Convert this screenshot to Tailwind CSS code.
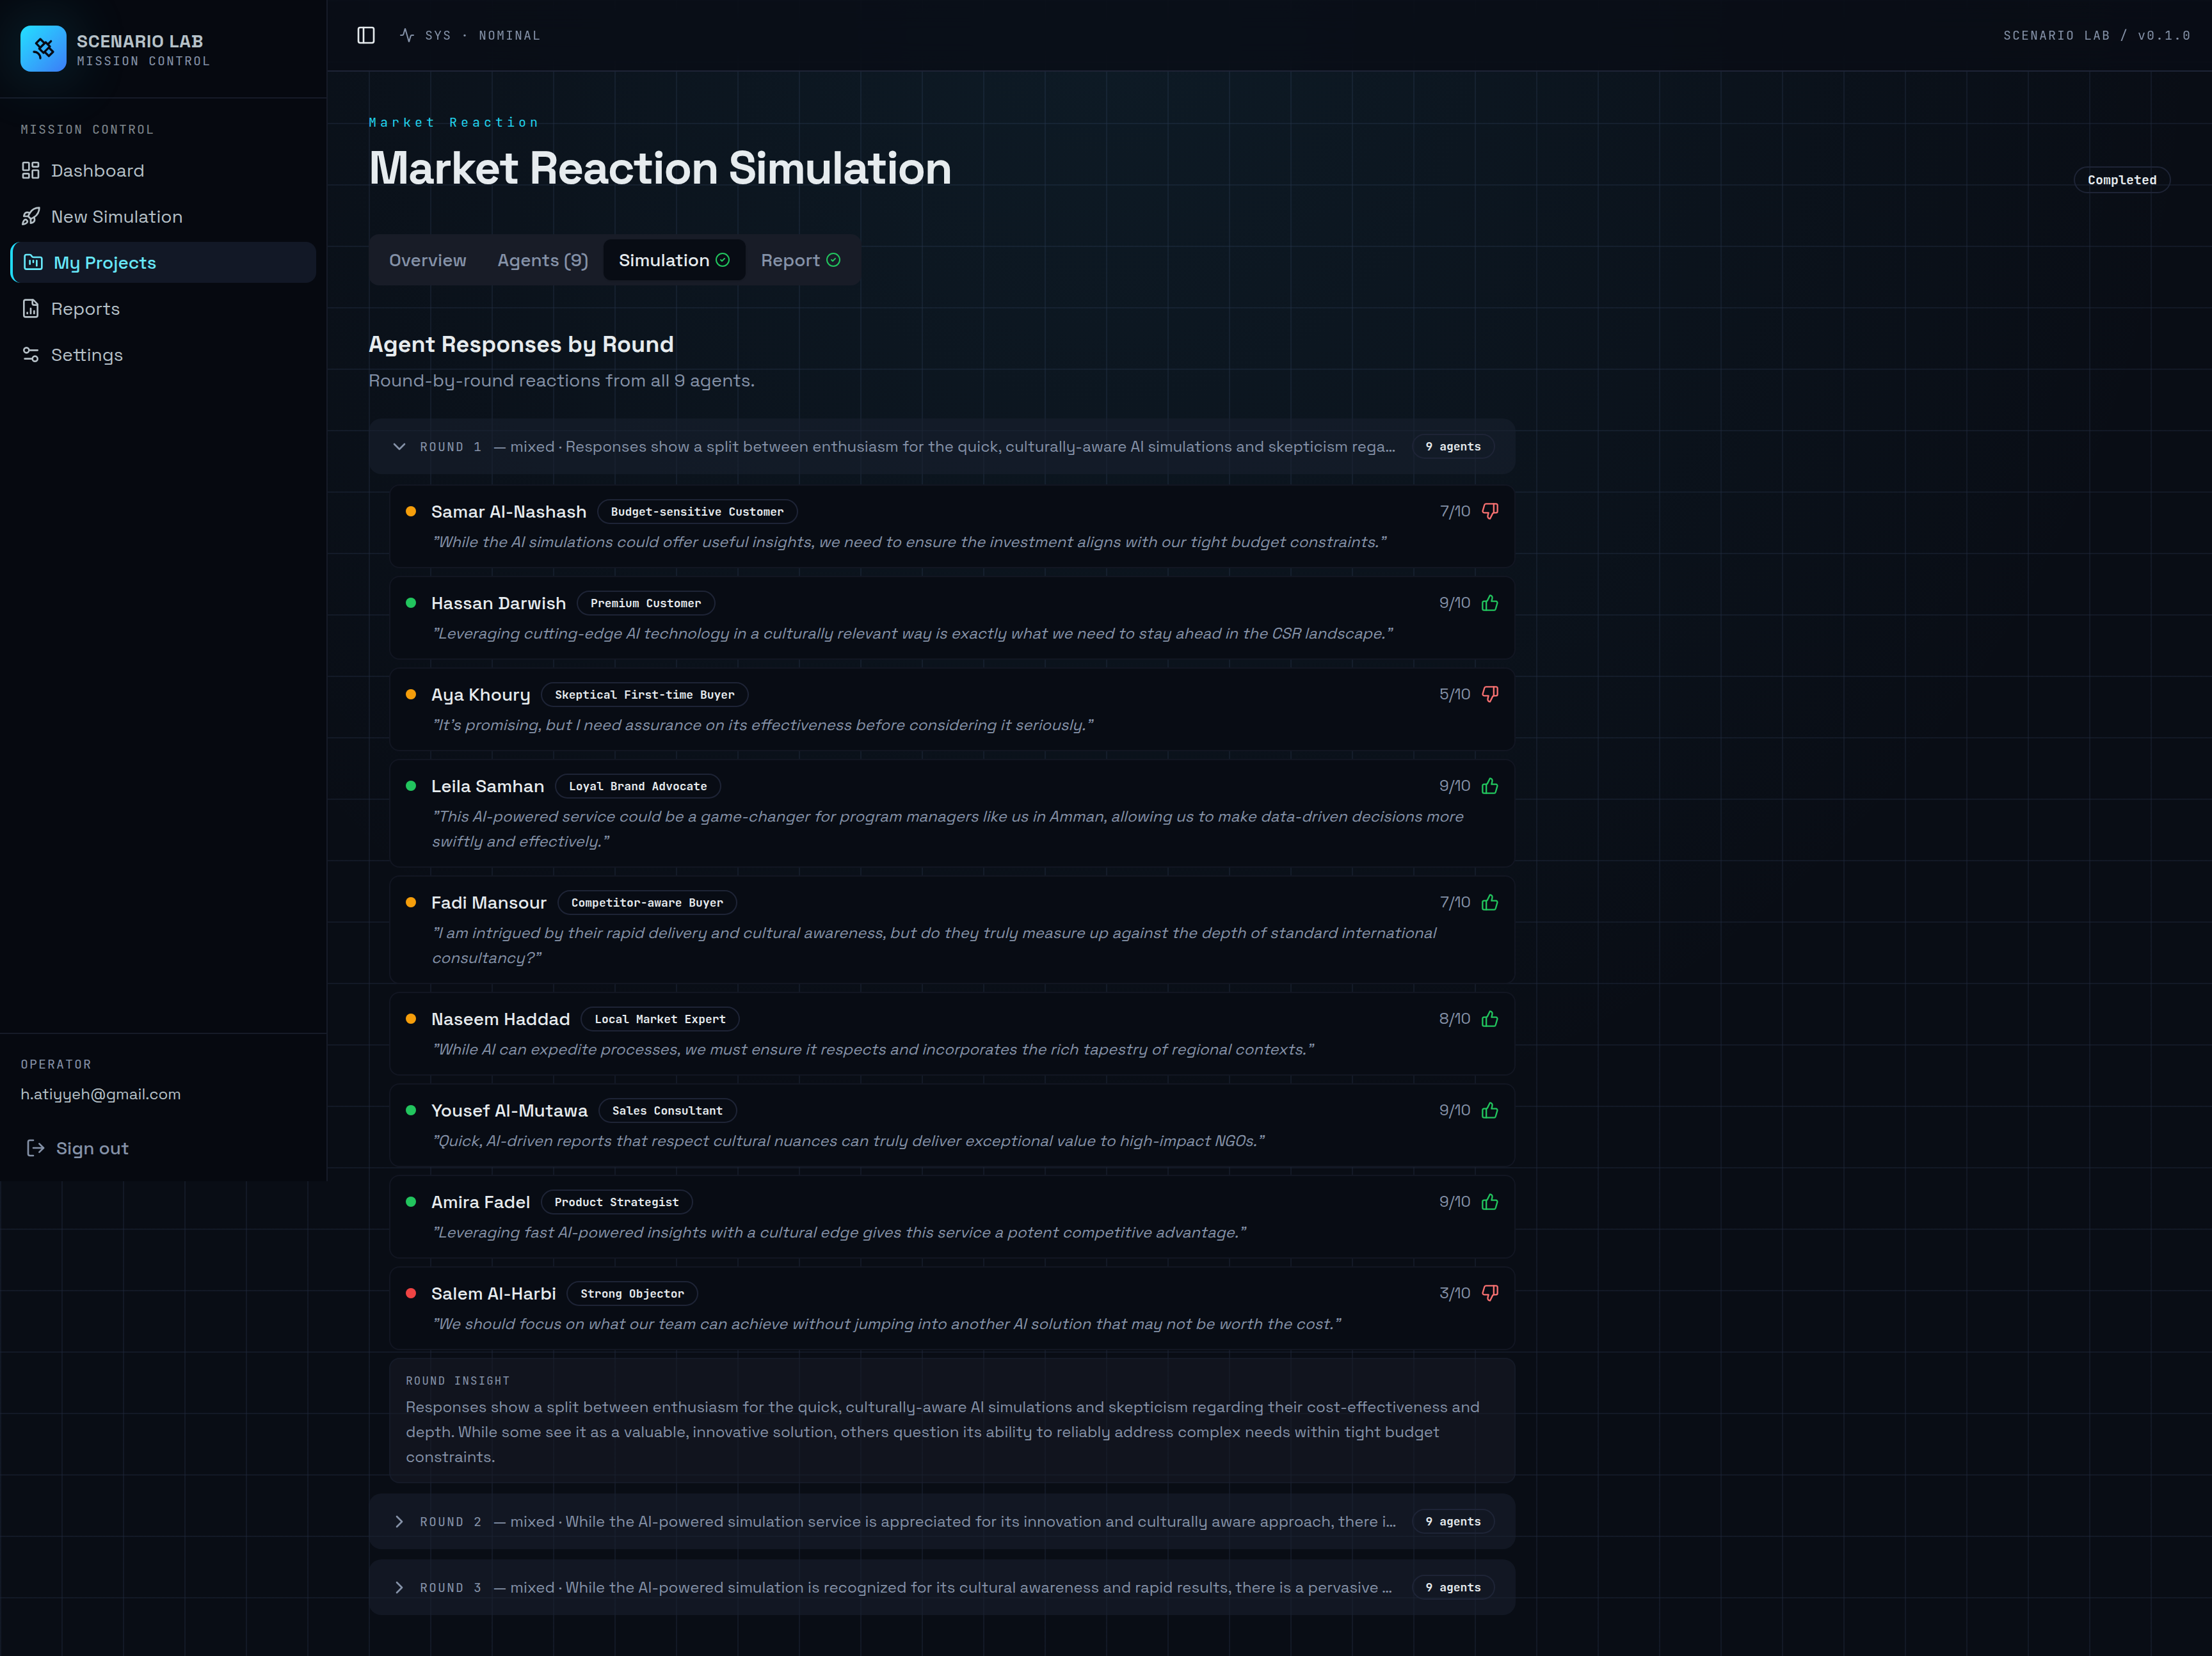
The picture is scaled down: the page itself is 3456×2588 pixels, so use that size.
<!DOCTYPE html>
<html lang="en">
<head>
<meta charset="utf-8">
<title>Scenario Lab</title>
<script src="https://cdn.jsdelivr.net/npm/@tailwindcss/browser@4"></script>
</head>
<body class="bg-[#090d15] font-['Space_Grotesk',Inter,sans-serif] text-[28px] leading-[40px] text-[#e6ebee] antialiased">

<svg class="hidden">
  <symbol id="up" viewBox="0 0 24 24" fill="none" stroke="currentColor" stroke-width="2" stroke-linecap="round" stroke-linejoin="round"><path d="M7 10v12"/><path d="M15 5.88 14 10h5.83a2 2 0 0 1 1.92 2.56l-2.33 8A2 2 0 0 1 17.5 22H4a2 2 0 0 1-2-2v-8a2 2 0 0 1 2-2h2.76a2 2 0 0 0 1.79-1.11L12 2a3.13 3.13 0 0 1 3 3.88Z"/></symbol>
  <symbol id="down" viewBox="0 0 24 24" fill="none" stroke="currentColor" stroke-width="2" stroke-linecap="round" stroke-linejoin="round"><path d="M17 14V2"/><path d="M9 18.12 10 14H4.17a2 2 0 0 1-1.92-2.56l2.33-8A2 2 0 0 1 6.5 2H20a2 2 0 0 1 2 2v8a2 2 0 0 1-2 2h-2.76a2 2 0 0 0-1.79 1.11L12 22a3.13 3.13 0 0 1-3-3.88Z"/></symbol>
  <symbol id="check" viewBox="0 0 24 24" fill="none" stroke="currentColor" stroke-width="2" stroke-linecap="round" stroke-linejoin="round"><circle cx="12" cy="12" r="10"/><path d="m9 12 2 2 4-4"/></symbol>
  <symbol id="right" viewBox="0 0 24 24" fill="none" stroke="currentColor" stroke-width="2" stroke-linecap="round" stroke-linejoin="round"><path d="m9 18 6-6-6-6"/></symbol>
</svg>

<div class="flex min-h-[2588px] w-[3456px] items-start bg-[radial-gradient(ellipse_1728px_1846px_at_50%_0,rgba(70,190,235,0.08),transparent),linear-gradient(to_right,rgba(34,42,62,0.4)_2px,transparent_2px),linear-gradient(to_bottom,rgba(34,42,62,0.4)_2px,transparent_2px)] bg-[size:100%_100%,96px_96px,96px_96px]">

  <aside class="flex h-[1846px] w-[512px] shrink-0 flex-col overflow-hidden border-r-2 border-[#161b28] bg-[#060910] text-[#b6c1c8]">
    <div class="flex h-[154px] shrink-0 items-start gap-4 border-b-2 border-[#161b28] px-8 pt-10">
      <div class="flex size-[72px] items-center justify-center rounded-2xl bg-linear-135 from-[#22e0ff] to-[#3b7bf6] text-[#060b16] shadow-[0_0_96px_rgba(34,211,238,0.25)]">
        <svg class="size-10" viewBox="0 0 24 24" fill="none" stroke="currentColor" stroke-width="2" stroke-linecap="round" stroke-linejoin="round"><path d="M13 7 9 3 5 7l4 4"/><path d="m17 11 4 4-4 4-4-4"/><path d="m8 12 4 4 6-6-4-4Z"/><path d="m16 8 3-3"/><path d="M9 21a6 6 0 0 0-6-6"/></svg>
      </div>
      <div class="pt-[7px]">
        <div class="text-[28px] leading-[35px] font-bold tracking-[0.7px]">SCENARIO LAB</div>
        <div class="font-['JetBrains_Mono',monospace] text-[20px] leading-[27px] tracking-[0.1em] text-[#8592a8]">MISSION CONTROL</div>
      </div>
    </div>
    <nav class="flex grow flex-col p-4">
      <div class="flex h-16 items-center px-4 font-['JetBrains_Mono',monospace] text-[20px] leading-[30px] tracking-[0.1em] text-[#7f878d]">MISSION CONTROL</div>
      <div class="flex flex-col gap-2">
        <a class="flex h-16 items-center gap-4 rounded-2xl px-4">
          <svg class="size-8" viewBox="0 0 24 24" fill="none" stroke="currentColor" stroke-width="2" stroke-linecap="round" stroke-linejoin="round"><rect width="7" height="9" x="3" y="3" rx="1"/><rect width="7" height="5" x="14" y="3" rx="1"/><rect width="7" height="9" x="14" y="12" rx="1"/><rect width="7" height="5" x="3" y="16" rx="1"/></svg>Dashboard</a>
        <a class="flex h-16 items-center gap-4 rounded-2xl px-4">
          <svg class="size-8" viewBox="0 0 24 24" fill="none" stroke="currentColor" stroke-width="2" stroke-linecap="round" stroke-linejoin="round"><path d="M4.5 16.5c-1.5 1.26-2 5-2 5s3.74-.5 5-2c.71-.84.7-2.13-.09-2.91a2.18 2.18 0 0 0-2.91-.09z"/><path d="m12 15-3-3a22 22 0 0 1 2-3.95A12.88 12.88 0 0 1 22 2c0 2.72-.78 7.5-6 11a22.35 22.35 0 0 1-4 2z"/><path d="M9 12H4s.55-3.03 2-4c1.62-1.08 5 0 5 0"/><path d="M12 15v5s3.03-.55 4-2c1.08-1.62 0-5 0-5"/></svg>New Simulation</a>
        <a class="flex h-16 items-center gap-4 rounded-2xl border-l-4 border-[#22dcfb] bg-[#121826] px-4 font-medium text-[#67e8f9]">
          <svg class="size-8" viewBox="0 0 24 24" fill="none" stroke="currentColor" stroke-width="2" stroke-linecap="round" stroke-linejoin="round"><path d="M4 20h16a2 2 0 0 0 2-2V8a2 2 0 0 0-2-2h-7.93a2 2 0 0 1-1.66-.9l-.82-1.2A2 2 0 0 0 7.93 3H4a2 2 0 0 0-2 2v13c0 1.1.9 2 2 2Z"/><path d="M8 10v4"/><path d="M12 10v2"/><path d="M16 10v6"/></svg>My Projects</a>
        <a class="flex h-16 items-center gap-4 rounded-2xl px-4">
          <svg class="size-8" viewBox="0 0 24 24" fill="none" stroke="currentColor" stroke-width="2" stroke-linecap="round" stroke-linejoin="round"><path d="M15 2H6a2 2 0 0 0-2 2v16a2 2 0 0 0 2 2h12a2 2 0 0 0 2-2V7Z"/><path d="M14 2v4a2 2 0 0 0 2 2h4"/><path d="M8 18v-1"/><path d="M12 18v-6"/><path d="M16 18v-3"/></svg>Reports</a>
        <a class="flex h-16 items-center gap-4 rounded-2xl px-4">
          <svg class="size-8" viewBox="0 0 24 24" fill="none" stroke="currentColor" stroke-width="2" stroke-linecap="round" stroke-linejoin="round"><path d="M20 7h-9"/><path d="M14 17H5"/><circle cx="17" cy="17" r="3"/><circle cx="7" cy="7" r="3"/></svg>Settings</a>
      </div>
    </nav>
    <div class="flex shrink-0 flex-col border-t-2 border-[#161b28] px-8 pt-8 pb-6">
      <div class="font-['JetBrains_Mono',monospace] text-[20px] leading-[30px] tracking-[0.1em] text-[#8592a8]">OPERATOR</div>
      <div class="mt-4 text-[24px] leading-[32px]">h.atiyyeh@gmail.com</div>
      <div class="mt-10 flex h-14 items-center gap-4 px-2 font-medium text-[#8592a8]">
        <svg class="size-8" viewBox="0 0 24 24" fill="none" stroke="currentColor" stroke-width="2" stroke-linecap="round" stroke-linejoin="round"><path d="M9 21H5a2 2 0 0 1-2-2V5a2 2 0 0 1 2-2h4"/><path d="m16 17 5-5-5-5"/><path d="M21 12H9"/></svg>Sign out</div>
    </div>
  </aside>

  <div class="flex grow flex-col">
    <header class="flex h-28 items-center border-b-2 border-[#1e2436] bg-[#090c15]/80 px-8 font-['JetBrains_Mono',monospace] text-[20px] leading-[30px] tracking-[0.1em] text-[#8592a8] backdrop-blur-xl">
      <div class="flex size-14 items-center justify-center text-[#e6ebee]">
        <svg class="size-8" viewBox="0 0 24 24" fill="none" stroke="currentColor" stroke-width="2" stroke-linecap="round" stroke-linejoin="round"><rect width="18" height="18" x="3" y="3" rx="2"/><path d="M9 3v18"/></svg>
      </div>
      <svg class="ml-6 size-6" viewBox="0 0 24 24" fill="none" stroke="currentColor" stroke-width="2" stroke-linecap="round" stroke-linejoin="round"><path d="M22 12h-2.48a2 2 0 0 0-1.93 1.46l-2.35 8.36a.25.25 0 0 1-.48 0L9.24 2.18a.25.25 0 0 0-.48 0l-2.35 8.36A2 2 0 0 1 4.49 12H2"/></svg>
      <span class="ml-4">SYS · NOMINAL</span>
      <span class="ml-auto">SCENARIO LAB / v0.1.0</span>
    </header>

    <main class="p-16">
      <div class="flex items-end justify-between">
        <div>
          <div class="font-['JetBrains_Mono',monospace] text-[20px] leading-[30px] tracking-[0.3em] text-[#22d3ee]">Market Reaction</div>
          <h1 class="mt-4 text-[72px] leading-[80px] font-bold tracking-[-0.025em]">Market Reaction Simulation</h1>
        </div>
        <span class="rounded-full border-2 border-[#1e2436] px-5 py-1 font-['JetBrains_Mono',monospace] text-[20px] leading-[30px] font-semibold">Completed</span>
      </div>

      <div class="mt-16 inline-flex h-20 items-center rounded-2xl bg-[#181c27] p-2 align-top font-medium text-[#8592a8]">
        <div class="flex h-16 items-center px-6">Overview</div>
        <div class="flex h-16 items-center px-6">Agents (9)</div>
        <div class="flex h-16 items-center gap-2 rounded-xl bg-[#080c14] px-6 text-[#e6ebee] shadow-sm">Simulation<svg class="size-6 text-[#22c55e]"><use href="#check"/></svg></div>
        <div class="flex h-16 items-center gap-2 px-6">Report<svg class="size-6 text-[#22c55e]"><use href="#check"/></svg></div>
      </div>

      <section class="mt-16 w-[1792px]">
        <h2 class="text-[36px] leading-[56px] font-semibold">Agent Responses by Round</h2>
        <p class="mt-2 text-[#8592a8]">Round-by-round reactions from all 9 agents.</p>

        <div class="mt-10 flex h-[87px] items-center gap-4 rounded-[20px] bg-[#1a2030]/55 px-8 text-[24px] text-[#8592a8]">
          <svg class="size-8 shrink-0" viewBox="0 0 24 24" fill="none" stroke="currentColor" stroke-width="2" stroke-linecap="round" stroke-linejoin="round"><path d="m6 9 6 6 6-6"/></svg>
          <span class="shrink-0 font-['JetBrains_Mono',monospace] text-[20px] tracking-[0.1em]">ROUND 1</span>
          <span class="min-w-0 grow overflow-hidden whitespace-nowrap">— mixed · Responses show a split between enthusiasm for the quick, culturally-aware AI simulations and skepticism rega…</span>
          <span class="shrink-0 rounded-full border-2 border-[#1e2436] px-5 py-1 font-['JetBrains_Mono',monospace] text-[18px] leading-[27px] font-semibold text-[#e6ebee]">9 agents</span>
        </div>

        <div class="mt-4 flex flex-col gap-3 pl-8">
          <article class="rounded-2xl border-2 border-[#121622] bg-[#080c14] px-6 py-5">
            <div class="flex items-center">
              <span class="size-4 rounded-full bg-[#f59e0b]"></span><span class="ml-6 font-medium">Samar Al-Nashash</span>
              <span class="ml-4 rounded-full border-2 border-[#1e2436] px-5 py-1 font-['JetBrains_Mono',monospace] text-[18px] leading-[27px] font-semibold">Budget-sensitive Customer</span>
              <span class="ml-auto text-[24px] text-[#8592a8]">7/10</span><svg class="ml-4 size-7 text-[#f87171]"><use href="#down"/></svg>
            </div>
            <p class="mt-2 pl-10 text-[24px] leading-[39px] text-[#8592a8] italic">"While the AI simulations could offer useful insights, we need to ensure the investment aligns with our tight budget constraints."</p>
          </article>
          <article class="rounded-2xl border-2 border-[#121622] bg-[#080c14] px-6 py-5">
            <div class="flex items-center">
              <span class="size-4 rounded-full bg-[#22c55e]"></span><span class="ml-6 font-medium">Hassan Darwish</span>
              <span class="ml-4 rounded-full border-2 border-[#1e2436] px-5 py-1 font-['JetBrains_Mono',monospace] text-[18px] leading-[27px] font-semibold">Premium Customer</span>
              <span class="ml-auto text-[24px] text-[#8592a8]">9/10</span><svg class="ml-4 size-7 text-[#22c55e]"><use href="#up"/></svg>
            </div>
            <p class="mt-2 pl-10 text-[24px] leading-[39px] text-[#8592a8] italic">"Leveraging cutting-edge AI technology in a culturally relevant way is exactly what we need to stay ahead in the CSR landscape."</p>
          </article>
          <article class="rounded-2xl border-2 border-[#121622] bg-[#080c14] px-6 py-5">
            <div class="flex items-center">
              <span class="size-4 rounded-full bg-[#f59e0b]"></span><span class="ml-6 font-medium">Aya Khoury</span>
              <span class="ml-4 rounded-full border-2 border-[#1e2436] px-5 py-1 font-['JetBrains_Mono',monospace] text-[18px] leading-[27px] font-semibold">Skeptical First-time Buyer</span>
              <span class="ml-auto text-[24px] text-[#8592a8]">5/10</span><svg class="ml-4 size-7 text-[#f87171]"><use href="#down"/></svg>
            </div>
            <p class="mt-2 pl-10 text-[24px] leading-[39px] text-[#8592a8] italic">"It's promising, but I need assurance on its effectiveness before considering it seriously."</p>
          </article>
          <article class="rounded-2xl border-2 border-[#121622] bg-[#080c14] px-6 py-5">
            <div class="flex items-center">
              <span class="size-4 rounded-full bg-[#22c55e]"></span><span class="ml-6 font-medium">Leila Samhan</span>
              <span class="ml-4 rounded-full border-2 border-[#1e2436] px-5 py-1 font-['JetBrains_Mono',monospace] text-[18px] leading-[27px] font-semibold">Loyal Brand Advocate</span>
              <span class="ml-auto text-[24px] text-[#8592a8]">9/10</span><svg class="ml-4 size-7 text-[#22c55e]"><use href="#up"/></svg>
            </div>
            <p class="mt-2 pl-10 text-[24px] leading-[39px] text-[#8592a8] italic">"This AI-powered service could be a game-changer for program managers like us in Amman, allowing us to make data-driven decisions more swiftly and effectively."</p>
          </article>
          <article class="rounded-2xl border-2 border-[#121622] bg-[#080c14] px-6 py-5">
            <div class="flex items-center">
              <span class="size-4 rounded-full bg-[#f59e0b]"></span><span class="ml-6 font-medium">Fadi Mansour</span>
              <span class="ml-4 rounded-full border-2 border-[#1e2436] px-5 py-1 font-['JetBrains_Mono',monospace] text-[18px] leading-[27px] font-semibold">Competitor-aware Buyer</span>
              <span class="ml-auto text-[24px] text-[#8592a8]">7/10</span><svg class="ml-4 size-7 text-[#22c55e]"><use href="#up"/></svg>
            </div>
            <p class="mt-2 pl-10 text-[24px] leading-[39px] text-[#8592a8] italic">"I am intrigued by their rapid delivery and cultural awareness, but do they truly measure up against the depth of standard international consultancy?"</p>
          </article>
          <article class="rounded-2xl border-2 border-[#121622] bg-[#080c14] px-6 py-5">
            <div class="flex items-center">
              <span class="size-4 rounded-full bg-[#f59e0b]"></span><span class="ml-6 font-medium">Naseem Haddad</span>
              <span class="ml-4 rounded-full border-2 border-[#1e2436] px-5 py-1 font-['JetBrains_Mono',monospace] text-[18px] leading-[27px] font-semibold">Local Market Expert</span>
              <span class="ml-auto text-[24px] text-[#8592a8]">8/10</span><svg class="ml-4 size-7 text-[#22c55e]"><use href="#up"/></svg>
            </div>
            <p class="mt-2 pl-10 text-[24px] leading-[39px] text-[#8592a8] italic">"While AI can expedite processes, we must ensure it respects and incorporates the rich tapestry of regional contexts."</p>
          </article>
          <article class="rounded-2xl border-2 border-[#121622] bg-[#080c14] px-6 py-5">
            <div class="flex items-center">
              <span class="size-4 rounded-full bg-[#22c55e]"></span><span class="ml-6 font-medium">Yousef Al-Mutawa</span>
              <span class="ml-4 rounded-full border-2 border-[#1e2436] px-5 py-1 font-['JetBrains_Mono',monospace] text-[18px] leading-[27px] font-semibold">Sales Consultant</span>
              <span class="ml-auto text-[24px] text-[#8592a8]">9/10</span><svg class="ml-4 size-7 text-[#22c55e]"><use href="#up"/></svg>
            </div>
            <p class="mt-2 pl-10 text-[24px] leading-[39px] text-[#8592a8] italic">"Quick, AI-driven reports that respect cultural nuances can truly deliver exceptional value to high-impact NGOs."</p>
          </article>
          <article class="rounded-2xl border-2 border-[#121622] bg-[#080c14] px-6 py-5">
            <div class="flex items-center">
              <span class="size-4 rounded-full bg-[#22c55e]"></span><span class="ml-6 font-medium">Amira Fadel</span>
              <span class="ml-4 rounded-full border-2 border-[#1e2436] px-5 py-1 font-['JetBrains_Mono',monospace] text-[18px] leading-[27px] font-semibold">Product Strategist</span>
              <span class="ml-auto text-[24px] text-[#8592a8]">9/10</span><svg class="ml-4 size-7 text-[#22c55e]"><use href="#up"/></svg>
            </div>
            <p class="mt-2 pl-10 text-[24px] leading-[39px] text-[#8592a8] italic">"Leveraging fast AI-powered insights with a cultural edge gives this service a potent competitive advantage."</p>
          </article>
          <article class="rounded-2xl border-2 border-[#121622] bg-[#080c14] px-6 py-5">
            <div class="flex items-center">
              <span class="size-4 rounded-full bg-[#ef4444]"></span><span class="ml-6 font-medium">Salem Al-Harbi</span>
              <span class="ml-4 rounded-full border-2 border-[#1e2436] px-5 py-1 font-['JetBrains_Mono',monospace] text-[18px] leading-[27px] font-semibold">Strong Objector</span>
              <span class="ml-auto text-[24px] text-[#8592a8]">3/10</span><svg class="ml-4 size-7 text-[#f87171]"><use href="#down"/></svg>
            </div>
            <p class="mt-2 pl-10 text-[24px] leading-[39px] text-[#8592a8] italic">"We should focus on what our team can achieve without jumping into another AI solution that may not be worth the cost."</p>
          </article>
          <div class="rounded-2xl border-2 border-[#1e2436]/40 bg-[#181b26]/55 px-6 py-5 text-[#8592a8]">
            <div class="font-['JetBrains_Mono',monospace] text-[18px] leading-[27px] tracking-[0.1em]">ROUND INSIGHT</div>
            <p class="mt-2 text-[24px] leading-[39px]">Responses show a split between enthusiasm for the quick, culturally-aware AI simulations and skepticism regarding their cost-effectiveness and depth. While some see it as a valuable, innovative solution, others question its ability to reliably address complex needs within tight budget constraints.</p>
          </div>
        </div>

        <div class="mt-4 flex h-[87px] items-center gap-4 rounded-[20px] bg-[#1a2030]/55 px-8 text-[24px] text-[#8592a8]">
          <svg class="size-8 shrink-0"><use href="#right"/></svg>
          <span class="shrink-0 font-['JetBrains_Mono',monospace] text-[20px] tracking-[0.1em]">ROUND 2</span>
          <span class="min-w-0 grow overflow-hidden whitespace-nowrap">— mixed · While the AI-powered simulation service is appreciated for its innovation and culturally aware approach, there i…</span>
          <span class="shrink-0 rounded-full border-2 border-[#1e2436] px-5 py-1 font-['JetBrains_Mono',monospace] text-[18px] leading-[27px] font-semibold text-[#e6ebee]">9 agents</span>
        </div>
        <div class="mt-4 flex h-[87px] items-center gap-4 rounded-[20px] bg-[#1a2030]/55 px-8 text-[24px] text-[#8592a8]">
          <svg class="size-8 shrink-0"><use href="#right"/></svg>
          <span class="shrink-0 font-['JetBrains_Mono',monospace] text-[20px] tracking-[0.1em]">ROUND 3</span>
          <span class="min-w-0 grow overflow-hidden whitespace-nowrap">— mixed · While the AI-powered simulation is recognized for its cultural awareness and rapid results, there is a pervasive …</span>
          <span class="shrink-0 rounded-full border-2 border-[#1e2436] px-5 py-1 font-['JetBrains_Mono',monospace] text-[18px] leading-[27px] font-semibold text-[#e6ebee]">9 agents</span>
        </div>
      </section>
    </main>
  </div>
</div>
</body>
</html>
